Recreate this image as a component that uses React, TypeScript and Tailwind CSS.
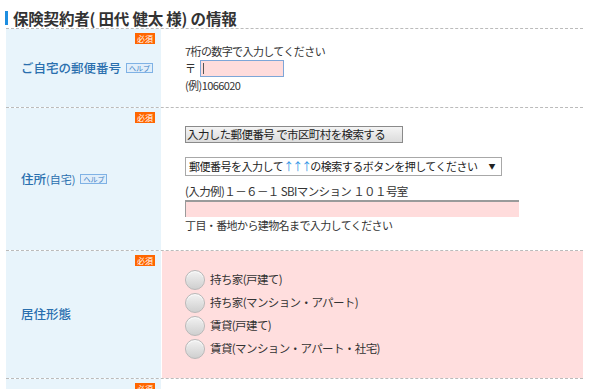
import React from 'react';

const JP = { fontFamily: '"Noto Sans CJK JP", "Liberation Sans", sans-serif' };

function Required() {
  return (
    <span className="absolute right-[6px] top-[4px] bg-[#ff6600] px-[2px] text-[8px] leading-[11px] text-white">
      必須
    </span>
  );
}

function Help() {
  return (
    <span className="ml-[5px] inline-block border border-[#7fb2e5] bg-[#e0eefa] px-[2px] text-[7px] font-normal leading-[8px] text-[#3b7fc4]">
      ヘルプ
    </span>
  );
}

function Row({
  label,
  help,
  height,
  pink,
  children,
}: {
  label: React.ReactNode;
  help?: boolean;
  height: number;
  pink?: boolean;
  children?: React.ReactNode;
}) {
  return (
    <div className="flex border-t border-dashed border-[#bbbbbb]" style={{ height }}>
      <div className="relative flex w-[156px] shrink-0 items-center border-r border-white bg-[#e8f4fb] pl-[15px]">
        <Required />
        <span className="text-[12.5px] font-medium text-[#2a6fae]">{label}</span>
        {help && <Help />}
      </div>
      <div className={`flex flex-1 items-center pl-[23px] ${pink ? 'bg-[#ffdede]' : 'bg-white'}`}>
        {children}
      </div>
    </div>
  );
}

const RESIDENCE = ['持ち家(戸建て)', '持ち家(マンション・アパート)', '賃貸(戸建て)', '賃貸(マンション・アパート・社宅)'];

export default function App() {
  return (
    <div className="h-[389px] w-[600px] overflow-hidden bg-white text-[#333333]" style={JP}>
      <div className="flex items-center pl-[5px] pt-[9px]">
        <span className="h-[14px] w-[3px] bg-[#1e8ee0]" />
        <h2 className="ml-[5px] text-[15.5px] font-bold leading-[18px] tracking-[-0.2px] text-[#333333]">
          保険契約者( 田代 健太 様) の情報
        </h2>
      </div>

      <div className="ml-[6px] mt-[1px] w-[577px]">
        <Row label="ご自宅の郵便番号" help height={79}>
          <div className="text-[11px] leading-[13px] tracking-[-0.6px]">
            <p>7桁の数字で入力してください</p>
            <div className="my-[2px] flex items-center">
              <span className="w-[15px]">〒</span>
              <div className="relative h-[17px] w-[84px] border border-[#7ea6d8] bg-[#ffdcdc]">
                <span className="absolute left-[2px] top-[2px] h-[11px] w-[1px] bg-[#555555]" />
              </div>
            </div>
            <p>(例)1066020</p>
          </div>
        </Row>

        <Row
          label={
            <>
              住所<span className="text-[11px] font-normal">(自宅)</span>
            </>
          }
          help
          height={143}
        >
          <div className="text-[11px] leading-[13px] tracking-[-0.6px]">
            <div className="flex h-[17px] w-[218px] items-center whitespace-nowrap border border-[#8a8a8a] bg-gradient-to-b from-[#f4f4f4] to-[#dcdcdc] pl-[1px] text-[11.5px] text-[#222222]">
              入力した郵便番号 で市区町村を検索する
            </div>
            <div className="mt-[14px] flex h-[19px] w-[317px] items-center justify-between whitespace-nowrap border border-[#a8a8a8] bg-white pl-[3px] pr-[6px] text-[11px] tracking-[-0.5px] text-[#222222]">
              <span>
                郵便番号を入力して<span className="tracking-[-2px] text-[#2f95e6]">↑↑↑</span>の検索するボタンを押してください
              </span>
              <span className="text-[7px]">▼</span>
            </div>
            <p className="mt-[9px] whitespace-nowrap text-[11.5px]">(入力例)１－６－１ SBIマンション １０１号室</p>
            <div className="mt-[2px] h-[17px] w-[334px] border-t-2 border-l border-[#9a9a9a] bg-[#ffdcdc]" />
            <p className="mt-[2px]">丁目・番地から建物名まで入力してください</p>
          </div>
        </Row>

        <Row label="居住形態" height={128} pink>
          <div className="flex flex-col gap-[3px]">
            {RESIDENCE.map((r) => (
              <div key={r} className="flex items-center text-[11.5px] tracking-[-0.6px] text-[#333333]">
                <span className="h-[20px] w-[20px] rounded-full border border-[#b8b8b8] bg-gradient-to-b from-[#f2f2f2] to-[#cfcfcf] shadow-[inset_0_1px_1px_rgba(255,255,255,0.8)]" />
                <span className="ml-[5px]">{r}</span>
              </div>
            ))}
          </div>
        </Row>

        <Row label="" height={40} />
      </div>
    </div>
  );
}
